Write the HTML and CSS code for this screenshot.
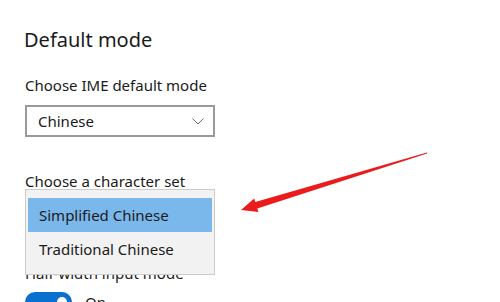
FILE: index.html
```html
<!DOCTYPE html>
<html>
<head>
<meta charset="utf-8">
<link rel="stylesheet" href="styles.css">
</head>
<body>
<div class="page">
  <h1 class="title">Default mode</h1>
  <div class="label first">Choose IME default mode</div>
  <div class="select">
    <span>Chinese</span>
    <svg class="chev" width="12" height="7" viewBox="0 0 12 7"><path d="M0.5 0.6 L6 6 L11.5 0.6" fill="none" stroke="#6a6a6a" stroke-width="1"/></svg>
  </div>
  <div class="label second">Choose a character set</div>
  <div class="select hidden-select"></div>
  <div class="label third">Half-width input mode</div>
  <div class="toggle-row">
    <div class="toggle"><div class="knob"></div></div>
    <span class="on">On</span>
  </div>

  <div class="popup">
    <div class="item selected">Simplified Chinese</div>
    <div class="item">Traditional Chinese</div>
  </div>

  <svg class="arrow" width="500" height="302" viewBox="0 0 500 302">
    <polygon points="426.9,152.6 255.3,202 254.2,198.6 241,210 258.4,212 257.3,208.6 427.1,153.4" fill="#ec1b1b"/>
  </svg>
</div>
</body>
</html>
```
FILE: styles.css
```css
html, body {
  margin: 0;
  padding: 0;
  background: #ffffff;
}
body {
  width: 500px;
  height: 302px;
  overflow: hidden;
  font-family: "Noto Sans", "Open Sans", sans-serif;
  color: #1a1a1a;
}
.page {
  position: relative;
  width: 500px;
  height: 302px;
  padding-left: 25px;
  box-sizing: border-box;
}
.title {
  margin: 0;
  padding-top: 26px;
  font-size: 20px;
  font-weight: 400;
  line-height: 28px;
  margin-left: -1px;
}
.label {
  font-size: 15px;
  line-height: 20px;
}
.label.first {
  margin-top: 21px;
}
.select {
  width: 190px;
  height: 32px;
  box-sizing: border-box;
  border: 2px solid #9a9a9a;
  margin-top: 10px;
  display: flex;
  align-items: center;
  justify-content: space-between;
  padding: 0 9px 0 11px;
  font-size: 15px;
}
.chev {
  display: block;
}
.label.second {
  margin-top: 34px;
}
.hidden-select {
  margin-top: 10px;
}
.label.third {
  margin-top: 30px;
}
.toggle-row {
  display: flex;
  align-items: center;
  gap: 13px;
  margin-top: 9px;
}
.toggle {
  width: 47px;
  height: 20px;
  border-radius: 10px;
  background: #0a6fcf;
  position: relative;
}
.knob {
  position: absolute;
  right: 5px;
  top: 5px;
  width: 10px;
  height: 10px;
  border-radius: 50%;
  background: #fff;
}
.on {
  font-size: 15px;
}
.popup {
  position: absolute;
  left: 25px;
  top: 189px;
  width: 190px;
  height: 86px;
  box-sizing: border-box;
  background: #f2f2f2;
  border: 1px solid #cccccc;
  padding: 8px 2px 0 2px;
}
.item {
  height: 34px;
  line-height: 34px;
  padding-left: 11px;
  font-size: 15px;
}
.item.selected {
  background: #7ab7ea;
}
.arrow {
  position: absolute;
  left: 0;
  top: 0;
  pointer-events: none;
}
```
